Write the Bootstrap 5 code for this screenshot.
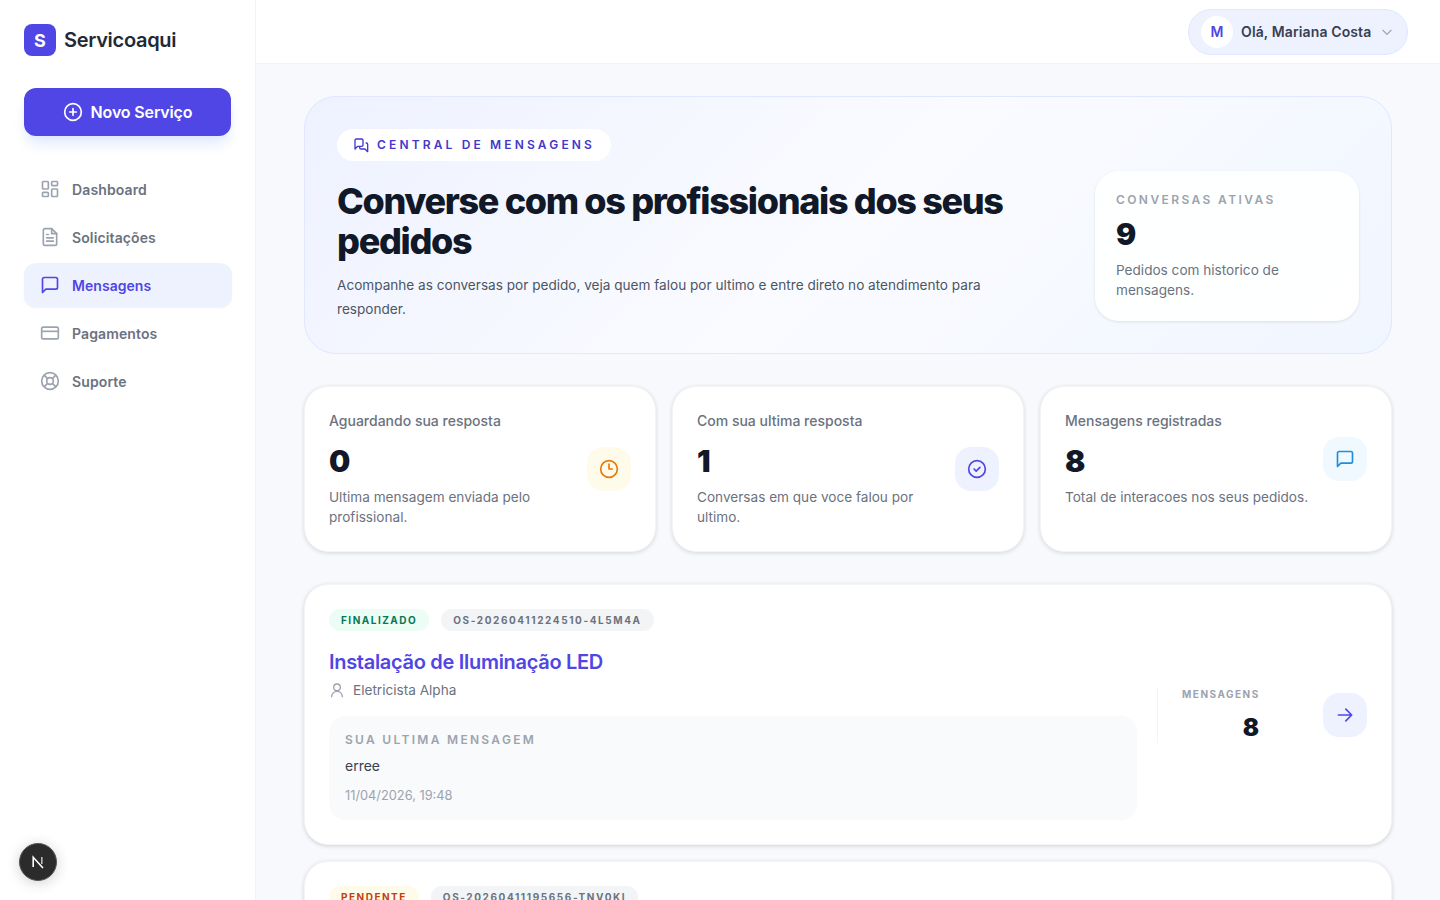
<!DOCTYPE html>
<html lang="pt-BR">
<head>
  <meta charset="UTF-8">
  <meta name="viewport" content="width=device-width, initial-scale=1.0">
  <title>Servicoaqui - Mensagens</title>
  <link href="https://cdn.jsdelivr.net/npm/bootstrap@5.3.0/dist/css/bootstrap.min.css" rel="stylesheet">
  <style>
    html, body { height: 100%; }
    body {
      font-family: Inter, "Liberation Sans", sans-serif;
      background: #f8f9fd;
      color: #111827;
      overflow: hidden;
    }
    svg { display: block; flex-shrink: 0; }
    .app-shell { height: 900px; }

    /* sidebar */
    .side-panel {
      width: 256px;
      background: #fff;
      border-right: 1px solid #f1f3f8;
      padding: 24px 24px 0;
      flex-shrink: 0;
    }
    .brand-box {
      width: 32px; height: 32px;
      border-radius: 8px;
      background: #4f46e5;
      color: #fff;
      font-weight: 700;
      font-size: 18px;
    }
    .brand-name { font-size: 20px; font-weight: 600; color: #1f2937; letter-spacing: -0.3px; }
    .new-btn {
      height: 48px;
      margin-top: 32px;
      border-radius: 12px;
      background: #4f46e5;
      border: 0;
      color: #fff;
      font-size: 16px;
      letter-spacing: -0.15px;
      font-weight: 600;
      width: 207px;
      box-shadow: 0 10px 15px -3px #e0e7ff, 0 4px 6px -4px #e0e7ff;
    }
    .side-menu { margin-top: 31px; width: 208px; }
    .side-link {
      height: 44px;
      padding: 0 16px;
      border-radius: 12px;
      color: #6b7280;
      font-size: 14px;
      font-weight: 600;
      letter-spacing: 0.12px;
      text-decoration: none;
      margin-bottom: 4px;
      gap: 12px;
    }
    .side-link svg { color: #9ca3af; }
    .side-link.is-on {
      background: #eef2ff;
      color: #4f46e5;
      letter-spacing: 0.05px;
      box-shadow: 0 1px 2px rgba(0,0,0,.06);
    }
    .side-link.is-on svg { color: #4f46e5; }
    .dev-dot {
      position: absolute;
      left: 19px; top: 843px;
      width: 38px; height: 38px;
      border-radius: 50%;
      background: #2b2b2b;
      border: 1px solid #555;
      box-shadow: 0 2px 14px rgba(0,0,0,.18);
    }

    /* top bar */
    .top-bar {
      height: 64px;
      background: #fff;
      border-bottom: 1px solid #f1f3f8;
      padding: 0 32px;
    }
    .user-pill {
      height: 46px;
      width: 220px;
      border-radius: 23px;
      background: #eef2ff;
      border: 1px solid #e0e7ff;
      padding: 0 13px 0 12px;
      gap: 8px;
    }
    .user-init {
      width: 32px; height: 32px;
      border-radius: 50%;
      background: #fff;
      color: #4f46e5;
      font-size: 14px;
      font-weight: 600;
      flex-shrink: 0;
    }
    .user-name { font-size: 14px; font-weight: 600; letter-spacing: 0.12px; color: #374151; white-space: nowrap; }

    /* content */
    .content-area { padding: 32px 48px; }
    .hero-panel {
      height: 258px;
      border-radius: 32px;
      border: 1px solid #e0e7ff;
      background: linear-gradient(135deg, #eef2ff 0%, #fafbff 50%, #f0f6ff 100%);
      padding: 32px;
    }
    .eyebrow {
      height: 32px;
      border-radius: 16px;
      background: #fff;
      color: #4338ca;
      font-size: 12px;
      font-weight: 600;
      letter-spacing: 3.15px;
      padding: 0 16px;
      gap: 8px;
    }
    .hero-title {
      font-size: 36px;
      line-height: 40px;
      font-weight: 800;
      letter-spacing: -1.33px;
      color: #111827;
      margin: 20px 0 0;
    }
    .hero-text { font-size: 13.6px; line-height: 24px; color: #4b5563; margin: 12px 0 0; }
    .hero-copy { width: 680px; }
    .active-box {
      width: 264px; height: 150px;
      margin-top: 42px;
      background: rgba(255,255,255,.9);
      border-radius: 24px;
      box-shadow: 0 1px 3px rgba(0,0,0,.1);
      padding: 21px 21px;
    }
    .tiny-label { font-size: 12px; font-weight: 600; letter-spacing: 2.4px; color: #9ca3af; line-height: 16px; }
    .big-num { font-size: 30px; font-weight: 900; color: #111827; line-height: 36px; }
    .note-text { font-size: 13.6px; line-height: 20px; color: #6b7280; }

    .stat-grid { display: grid; grid-template-columns: repeat(3, 1fr); gap: 16px; margin-top: 32px; }
    .stat-box {
      height: 166px;
      background: #fff;
      border-radius: 24px;
      border: 1px solid #f3f4f6;
      box-shadow: 0 1px 4px rgba(0,0,0,.14);
      padding: 24px;
    }
    .stat-box .big-num { margin-top: 12px; }
    .stat-name { font-size: 14px; font-weight: 500; color: #6b7280; line-height: 20px; }
    .icon-tile { width: 44px; height: 44px; border-radius: 16px; flex-shrink: 0; }
    .tile-amber { background: #fffbeb; color: #ea7a08; }
    .tile-indigo { background: #eef2ff; color: #4f46e5; }
    .tile-sky { background: #f0f9ff; color: #1d8fe0; }

    .order-box {
      height: 261px;
      margin-top: 32px;
      background: #fff;
      border-radius: 24px;
      border: 1px solid #f3f4f6;
      box-shadow: 0 1px 4px rgba(0,0,0,.16);
      padding: 24px;
    }
    .order-box.next-one { margin-top: 16px; }
    .status-tag, .code-tag {
      height: 22px;
      border-radius: 11px;
      font-size: 10px;
      font-weight: 700;
      letter-spacing: 1.5px;
      padding: 0 12px;
    }
    .tag-row { gap: 12px; }
    .tag-done { background: #ecfdf5; color: #047857; }
    .tag-wait { background: #fffbeb; color: #c2410c; }
    .code-tag { background: #f3f4f6; color: #6b7280; letter-spacing: 1.6px; }
    .order-title { font-size: 20px; font-weight: 600; color: #4f46e5; line-height: 28px; letter-spacing: -0.3px; margin: 17px 0 0; }
    .pro-name { font-size: 13.6px; color: #6b7280; line-height: 20px; margin-top: 4px; gap: 8px; }
    .last-msg {
      width: 808px; height: 104px;
      margin-top: 16px;
      background: #f9fafb;
      border-radius: 16px;
      padding: 16px;
    }
    .last-msg .tiny-label { letter-spacing: 2.3px; }
    .msg-body { font-size: 14px; color: #374151; line-height: 20px; margin-top: 8px; }
    .msg-date { font-size: 12.8px; color: #9ca3af; line-height: 16px; margin-top: 12px; }
    .count-col {
      width: 102px; height: 56px;
      margin-left: 20px;
      border-left: 1px solid #f3f4f6;
      padding-left: 24px;
    }
    .count-label { font-size: 10px; font-weight: 700; letter-spacing: 1.5px; color: #9ca3af; line-height: 14px; }
    .count-num { font-size: 24px; font-weight: 900; line-height: 32px; color: #111827; margin-top: 11px; }
    .go-tile { margin-left: 64px; }
  </style>
</head>
<body>
  <div class="app-shell d-flex position-relative">

    <!-- Sidebar -->
    <aside class="side-panel">
      <div class="d-flex align-items-center gap-2">
        <div class="brand-box d-flex align-items-center justify-content-center">S</div>
        <span class="brand-name">Servicoaqui</span>
      </div>
      <button class="new-btn d-flex align-items-center justify-content-center gap-2" type="button">
        <svg width="20" height="20" viewBox="0 0 24 24" fill="none" stroke="currentColor" stroke-width="2" stroke-linecap="round"><circle cx="12" cy="12" r="10"/><path d="M12 8v8M8 12h8"/></svg>
        Novo Serviço
      </button>
      <nav class="side-menu">
        <a class="side-link d-flex align-items-center" href="#">
          <svg width="20" height="20" viewBox="0 0 24 24" fill="none" stroke="currentColor" stroke-width="2" stroke-linejoin="round"><rect x="3" y="3" width="7" height="9" rx="1"/><rect x="14" y="3" width="7" height="5" rx="1"/><rect x="14" y="12" width="7" height="9" rx="1"/><rect x="3" y="16" width="7" height="5" rx="1"/></svg>
          Dashboard
        </a>
        <a class="side-link d-flex align-items-center" href="#">
          <svg width="20" height="20" viewBox="0 0 24 24" fill="none" stroke="currentColor" stroke-width="2" stroke-linecap="round" stroke-linejoin="round"><path d="M14 2H6a2 2 0 0 0-2 2v16a2 2 0 0 0 2 2h12a2 2 0 0 0 2-2V8z"/><path d="M14 2v6h6M8 13h8M8 17h8M8 9h2"/></svg>
          Solicitações
        </a>
        <a class="side-link is-on d-flex align-items-center" href="#">
          <svg width="20" height="20" viewBox="0 0 24 24" fill="none" stroke="currentColor" stroke-width="2" stroke-linejoin="round"><path d="M21 15a2 2 0 0 1-2 2H7l-4 4V5a2 2 0 0 1 2-2h14a2 2 0 0 1 2 2z"/></svg>
          Mensagens
        </a>
        <a class="side-link d-flex align-items-center" href="#">
          <svg width="20" height="20" viewBox="0 0 24 24" fill="none" stroke="currentColor" stroke-width="2" stroke-linejoin="round"><rect x="2" y="5" width="20" height="14" rx="2"/><path d="M2 10h20"/></svg>
          Pagamentos
        </a>
        <a class="side-link d-flex align-items-center" href="#">
          <svg width="20" height="20" viewBox="0 0 24 24" fill="none" stroke="currentColor" stroke-width="2"><circle cx="12" cy="12" r="10"/><circle cx="12" cy="12" r="4"/><path d="m4.9 4.9 4.3 4.3M14.8 14.8l4.3 4.3M14.8 9.2l4.3-4.3M4.9 19.1l4.3-4.3"/></svg>
          Suporte
        </a>
      </nav>
      <div class="dev-dot d-flex align-items-center justify-content-center">
        <svg width="16" height="16" viewBox="0 0 16 16" fill="none" stroke="#fff" stroke-width="1.6"><path d="M3.2 13V3.2L13 14"/><path d="M11.8 3v7" stroke="#bbb"/></svg>
      </div>
    </aside>

    <div class="flex-grow-1 d-flex flex-column overflow-hidden">
      <!-- Top bar -->
      <header class="top-bar d-flex align-items-center justify-content-end flex-shrink-0">
        <div class="user-pill d-flex align-items-center">
          <span class="user-init d-flex align-items-center justify-content-center">M</span>
          <span class="user-name">Olá, Mariana Costa</span>
          <svg class="ms-auto" width="14" height="14" viewBox="0 0 24 24" fill="none" stroke="#9ca3af" stroke-width="2" stroke-linecap="round" stroke-linejoin="round"><path d="m5 9 7 7 7-7"/></svg>
        </div>
      </header>

      <main class="content-area">
        <!-- Hero -->
        <section class="hero-panel d-flex justify-content-between">
          <div class="hero-copy">
            <span class="eyebrow d-inline-flex align-items-center">
              <svg width="16" height="16" viewBox="0 0 24 24" fill="none" stroke="currentColor" stroke-width="2" stroke-linejoin="round"><path d="M15 12a2 2 0 0 1-2 2H7l-4 4V5a2 2 0 0 1 2-2h8a2 2 0 0 1 2 2z"/><path d="M19 9h1a2 2 0 0 1 2 2v11l-4-4h-6a2 2 0 0 1-2-2v-1"/></svg>
              CENTRAL DE MENSAGENS
            </span>
            <h1 class="hero-title">Converse com os profissionais dos seus pedidos</h1>
            <p class="hero-text">Acompanhe as conversas por pedido, veja quem falou por ultimo e entre direto no atendimento para responder.</p>
          </div>
          <div class="active-box">
            <div class="tiny-label">CONVERSAS ATIVAS</div>
            <div class="big-num mt-2">9</div>
            <div class="note-text mt-2">Pedidos com historico de mensagens.</div>
          </div>
        </section>

        <!-- Stats -->
        <section class="stat-grid">
          <div class="stat-box">
            <div class="d-flex justify-content-between align-items-center">
              <div>
                <div class="stat-name">Aguardando sua resposta</div>
                <div class="big-num">0</div>
                <div class="note-text mt-2">Ultima mensagem enviada pelo profissional.</div>
              </div>
              <div class="icon-tile tile-amber d-flex align-items-center justify-content-center ms-2">
                <svg width="20" height="20" viewBox="0 0 24 24" fill="none" stroke="currentColor" stroke-width="2" stroke-linecap="round" stroke-linejoin="round"><circle cx="12" cy="12" r="10"/><path d="M12 6v6h4"/></svg>
              </div>
            </div>
          </div>
          <div class="stat-box">
            <div class="d-flex justify-content-between align-items-center">
              <div>
                <div class="stat-name">Com sua ultima resposta</div>
                <div class="big-num">1</div>
                <div class="note-text mt-2">Conversas em que voce falou por ultimo.</div>
              </div>
              <div class="icon-tile tile-indigo d-flex align-items-center justify-content-center ms-2">
                <svg width="20" height="20" viewBox="0 0 24 24" fill="none" stroke="currentColor" stroke-width="2" stroke-linecap="round" stroke-linejoin="round"><circle cx="12" cy="12" r="10"/><path d="m8.5 12 2.5 2.5 4.5-4.5"/></svg>
              </div>
            </div>
          </div>
          <div class="stat-box">
            <div class="d-flex justify-content-between align-items-center">
              <div>
                <div class="stat-name">Mensagens registradas</div>
                <div class="big-num">8</div>
                <div class="note-text mt-2">Total de interacoes nos seus pedidos.</div>
              </div>
              <div class="icon-tile tile-sky d-flex align-items-center justify-content-center ms-2">
                <svg width="20" height="20" viewBox="0 0 24 24" fill="none" stroke="currentColor" stroke-width="2" stroke-linejoin="round"><path d="M21 15a2 2 0 0 1-2 2H7l-4 4V5a2 2 0 0 1 2-2h14a2 2 0 0 1 2 2z"/></svg>
              </div>
            </div>
          </div>
        </section>

        <!-- Orders -->
        <section class="order-box d-flex">
          <div>
            <div class="tag-row d-flex align-items-center">
              <span class="status-tag tag-done d-inline-flex align-items-center">FINALIZADO</span>
              <span class="code-tag d-inline-flex align-items-center">OS-20260411224510-4L5M4A</span>
            </div>
            <h2 class="order-title">Instalação de Iluminação LED</h2>
            <div class="pro-name d-flex align-items-center">
              <svg width="16" height="16" viewBox="0 0 24 24" fill="none" stroke="#9ca3af" stroke-width="2" stroke-linecap="round"><circle cx="12" cy="8" r="5"/><path d="M4 22a8 8 0 0 1 16 0"/></svg>
              Eletricista Alpha
            </div>
            <div class="last-msg">
              <div class="tiny-label">SUA ULTIMA MENSAGEM</div>
              <div class="msg-body">erree</div>
              <div class="msg-date">11/04/2026, 19:48</div>
            </div>
          </div>
          <div class="d-flex align-items-center align-self-center">
            <div class="count-col">
              <div class="count-label">MENSAGENS</div>
              <div class="count-num text-end">8</div>
            </div>
            <div class="icon-tile tile-indigo go-tile d-flex align-items-center justify-content-center">
              <svg width="20" height="20" viewBox="0 0 24 24" fill="none" stroke="currentColor" stroke-width="2" stroke-linecap="round" stroke-linejoin="round"><path d="M4 12h16M13 5l7 7-7 7"/></svg>
            </div>
          </div>
        </section>

        <section class="order-box next-one">
          <div class="tag-row d-flex align-items-center">
            <span class="status-tag tag-wait d-inline-flex align-items-center">PENDENTE</span>
            <span class="code-tag d-inline-flex align-items-center">OS-20260411195656-TNV0KI</span>
          </div>
        </section>
      </main>
    </div>
  </div>
  <script src="https://cdn.jsdelivr.net/npm/bootstrap@5.3.0/dist/js/bootstrap.bundle.min.js"></script>
</body>
</html>
